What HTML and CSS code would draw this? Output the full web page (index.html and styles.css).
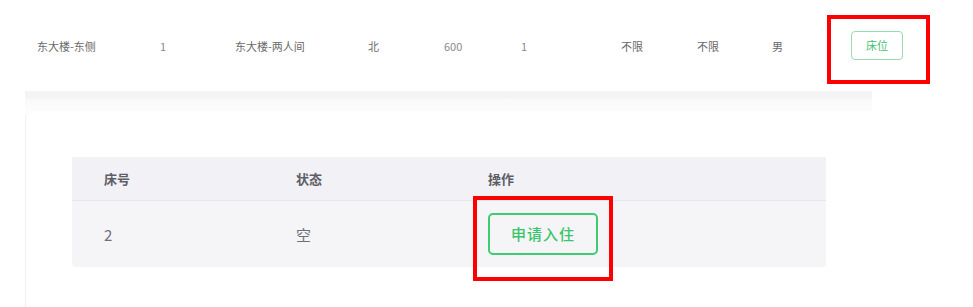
FILE: index.html
```html
<!doctype html>
<html>
<head>
	<meta charset="utf-8">
	<title>宿舍床位</title>
	<link rel="stylesheet" href="styles.css">
</head>
<body>
	<div class="room-row">
		<span class="c-building">东大楼-东侧</span>
		<span class="c-floor">1</span>
		<span class="c-type">东大楼-两人间</span>
		<span class="c-face">北</span>
		<span class="c-price">600</span>
		<span class="c-count">1</span>
		<span class="c-limit">不限</span>
		<span class="c-limit2">不限</span>
		<span class="c-sex">男</span>
		<span class="c-op">
			<a href="javascript:void(0)" class="btn-bed">床位</a>
			<i class="mark mark-bed"></i>
		</span>
	</div>

	<div class="drawer">
		<div class="drawer-card">
			<div class="bed-table">
				<div class="bed-head">
					<span>床号</span>
					<span>状态</span>
					<span>操作</span>
				</div>
				<div class="bed-row">
					<span>2</span>
					<span>空</span>
					<span class="bed-op">
						<a href="javascript:void(0)" class="btn-apply">申请入住</a>
						<i class="mark mark-apply"></i>
					</span>
				</div>
			</div>
		</div>
	</div>
</body>
</html>
```

FILE: styles.css
```css
body {
	margin: 0;
	background: #fff;
	font-family: "Noto Sans CJK SC", "Noto Sans", sans-serif;
	color: #666;
	overflow: hidden;
}
a {
	text-decoration: none;
}

.room-row {
	display: grid;
	grid-template-columns: 123px 75px 133px 76px 77px 100px 76px 75px 79px 1fr;
	align-items: center;
	height: 91px;
	padding-left: 37px;
	font-size: 11px;
	color: #6a6a6a;
}
.room-row .c-floor,
.room-row .c-price,
.room-row .c-count {
	color: #8a8a8a;
}
.c-op {
	position: relative;
	display: flex;
	align-items: center;
}
.btn-bed {
	display: inline-block;
	width: 50px;
	height: 27px;
	line-height: 27px;
	text-align: center;
	border: 1px solid #96dcb0;
	border-radius: 4px;
	color: #3dc36e;
	font-size: 11px;
}

.mark {
	position: absolute;
	border: 4px solid #ff0000;
	pointer-events: none;
}
.mark-bed {
	left: -24px;
	top: -16px;
	width: 95px;
	height: 61px;
}
.mark-apply {
	left: -15px;
	top: -17px;
	width: 132px;
	height: 77px;
}

.drawer {
	width: 847px;
	margin-left: 25px;
	padding-top: 21px;
	background: linear-gradient(#f4f4f4 0, #f4f4f4 7px, #f9f9f9 8px, #fdfdfd 21px, #fff 21px);
}
.drawer-card {
	background: #fff;
	border-left: 1px solid #f0f0f0;
	border-radius: 6px 6px 0 0;
	padding: 45px 0 40px 46px;
}
.bed-table {
	width: 754px;
}
.bed-head,
.bed-row {
	display: grid;
	grid-template-columns: 192px 192px 1fr;
	align-items: center;
	padding-left: 32px;
}
.bed-head {
	height: 43px;
	background: #f1f1f6;
	border-bottom: 1px solid #e5e5ee;
	font-size: 13px;
	font-weight: 700;
	color: #5e5e66;
}
.bed-row {
	height: 66px;
	background: #f5f5f8;
	border-radius: 0 0 4px 4px;
	font-size: 15px;
	color: #707078;
}
.bed-op {
	position: relative;
	display: flex;
	align-items: center;
}
.btn-apply {
	display: inline-block;
	width: 106px;
	height: 38px;
	line-height: 38px;
	text-align: center;
	border: 2px solid #3ecb72;
	border-radius: 5px;
	color: #38c56c;
	font-size: 15px;
	font-weight: 500;
	letter-spacing: 1px;
}
```
